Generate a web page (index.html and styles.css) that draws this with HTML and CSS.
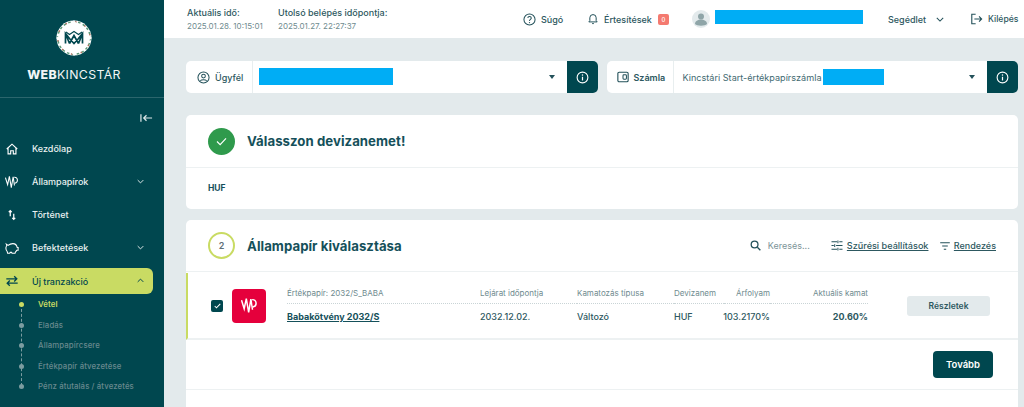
FILE: index.html
```html
<!DOCTYPE html>
<html lang="hu">
<head>
<meta charset="utf-8">
<title>WebKincstár</title>
<link rel="stylesheet" href="styles.css">
</head>
<body>
<div class="app">
  <aside class="sidebar">
    <div class="brand">
      <svg class="logo" viewBox="0 0 36 36" width="36" height="36">
        <circle cx="18" cy="18" r="17.500" fill="#fff"/>
        <circle cx="18" cy="18" r="16.200" fill="none" stroke="#5f9a78" stroke-width="1.500" stroke-dasharray="2.500 2.500"/>
        <circle cx="18" cy="18" r="16.200" fill="none" stroke="#b0705f" stroke-width="1.500" stroke-dasharray="1.500 8.500" stroke-dashoffset="3"/>
        <path fill="#fff" d="M0 18l5-3.500v7zM36 18l-5-3.500v7zM18 36l-3.500-5h7zM18 0l-3.500 5h7z"/>
        <path fill="none" stroke="#00474f" stroke-width="1.700" d="M9.500 23.500V13.500l4 5 4.500 5 4.500-5 4-5v10M9.500 13.500l4 10M26.500 13.500l-4 10M13.500 23.500L18 15.500l4.500 8"/>
        <path fill="none" stroke="#00474f" stroke-width="1.100" d="M10 12l3.500 2.500L18 11.500l4.500 3L26 12"/>
      </svg>
      <div class="brand-name"><b>WEB</b>KINCSTÁR</div>
    </div>
    <div class="collapse-row">
      <svg viewBox="0 0 14 10" width="13" height="10"><path d="M1 1v8M13 5H4M7 2L4 5l3 3" fill="none" stroke="#dfe9ea" stroke-width="1.300"/></svg>
    </div>
    <nav class="menu">
      <a class="item">
        <svg class="ico" viewBox="0 0 16 16"><path d="M2 8l6-5.500L14 8M3.500 7v6.500h3V10h3v3.500h3V7" fill="none" stroke="#fff" stroke-width="1.300"/></svg>
        <span>Kezdőlap</span>
      </a>
      <a class="item">
        <svg class="ico" viewBox="0 0 16 16"><path d="M.5 3l2.500 8L5 1.500l2.200 13L9.300 2l1.500 10M10.500 2.500c4.500-.5 5 6 .7 7" fill="none" stroke="#fff" stroke-width="1.200"/></svg>
        <span>Állampapírok</span>
        <svg class="chev" viewBox="0 0 10 6"><path d="M1 1l4 4 4-4" fill="none" stroke="#dfe9ea" stroke-width="1.400"/></svg>
      </a>
      <a class="item">
        <svg class="ico" viewBox="0 0 16 16"><path d="M6 9.500V3M4.300 4.800L6 3l1.700 1.800M10 6.500V13M8.300 11.200L10 13l1.700-1.800" fill="none" stroke="#fff" stroke-width="1.400"/></svg>
        <span>Történet</span>
      </a>
      <a class="item">
        <svg class="ico" viewBox="0 0 16 16"><path d="M1.500 3.500l2 1.500C5 3.800 7 3 9 3c2.800 0 4.500 2 5 4.500h1v3h-1.500c-.5 1-1 1.500-1.500 2l-.5 1.500H8l-.5-1H6l-.5 1H3L2.500 12C1.500 11 1 9.500 1 8c0-1 .5-2 1-3z" fill="none" stroke="#fff" stroke-width="1.200"/></svg>
        <span>Befektetések</span>
        <svg class="chev" viewBox="0 0 10 6"><path d="M1 1l4 4 4-4" fill="none" stroke="#dfe9ea" stroke-width="1.400"/></svg>
      </a>
      <a class="item active">
        <svg class="ico" viewBox="0 0 16 16"><path d="M1.500 5.500h12M10.500 2.500l3 3-3 3M14.500 10.500h-12M5.500 7.500l-3 3 3 3" fill="none" stroke="#00474f" stroke-width="1.500"/></svg>
        <span>Új tranzakció</span>
        <svg class="chev" viewBox="0 0 10 6"><path d="M1 5l4-4 4 4" fill="none" stroke="#00474f" stroke-width="1.400"/></svg>
      </a>
    </nav>
    <ul class="sub">
      <li class="current">Vétel</li>
      <li>Eladás</li>
      <li>Állampapírcsere</li>
      <li>Értékpapír átvezetése</li>
      <li>Pénz átutalás / átvezetés</li>
    </ul>
  </aside>

  <div class="main">
    <header class="topbar">
      <div class="time">
        <div class="time-label">Aktuális idő:</div>
        <div class="time-value">2025.01.28. 10:15:01</div>
      </div>
      <div class="time">
        <div class="time-label">Utolsó belépés időpontja:</div>
        <div class="time-value">2025.01.27. 22:27:37</div>
      </div>
      <a class="top-link help">
        <svg viewBox="0 0 14 14" width="13" height="13"><circle cx="7" cy="7" r="6" fill="none" stroke="#23515a" stroke-width="1.100"/><path d="M5.200 5.500c0-2.300 3.700-2.300 3.700 0 0 1.500-1.900 1.400-1.900 3" fill="none" stroke="#23515a" stroke-width="1.100"/><circle cx="7" cy="10.300" r=".7" fill="#23515a"/></svg>
        Súgó
      </a>
      <a class="top-link notif">
        <svg viewBox="0 0 12 14" width="10" height="12"><path d="M1 10.500h10L9.800 9V5.500a3.800 3.800 0 0 0-7.600 0V9zM5 12.500h2" fill="none" stroke="#23515a" stroke-width="1.200"/></svg>
        Értesítések
        <span class="badge">0</span>
      </a>
      <div class="user">
        <svg viewBox="0 0 18 18" width="18" height="18"><circle cx="9" cy="9" r="9" fill="#e3eaec"/><circle cx="9" cy="6.500" r="3" fill="#8fa5a8"/><path d="M3 14c0-6 12-6 12 0-2 2.300-10 2.300-12 0z" fill="#8fa5a8"/></svg>
        <span class="mask mask-user"></span>
      </div>
      <a class="top-link guide">
        Segédlet
        <svg viewBox="0 0 10 6" width="8" height="5"><path d="M1 1l4 4 4-4" fill="none" stroke="#23515a" stroke-width="1.300"/></svg>
      </a>
      <a class="top-link logout">
        <svg viewBox="0 0 14 14" width="13" height="12"><path d="M6 1.500H1.500v11H6M4.500 7H13M10 4l3 3-3 3" fill="none" stroke="#23515a" stroke-width="1.300"/></svg>
        Kilépés
      </a>
    </header>

    <div class="content">
      <div class="selectors">
        <div class="selector">
          <div class="sel-label client">
            <svg viewBox="0 0 14 14" width="13" height="13"><circle cx="7" cy="7" r="6" fill="none" stroke="#23515a" stroke-width="1.100"/><circle cx="7" cy="5.500" r="2" fill="none" stroke="#23515a" stroke-width="1.100"/><path d="M3.500 10.500c1.500-1.500 5.500-1.500 7 0" fill="none" stroke="#23515a" stroke-width="1.100"/></svg>
            Ügyfél
          </div>
          <div class="sel-value">
            <span class="mask mask-client"></span>
            <span class="caret"></span>
          </div>
          <button class="info"><svg viewBox="0 0 14 14" width="13" height="13"><circle cx="7" cy="7" r="5.800" fill="none" stroke="#fff" stroke-width="1.200"/><path d="M7 6.200v4" stroke="#fff" stroke-width="1.300"/><circle cx="7" cy="4.200" r=".8" fill="#fff"/></svg></button>
        </div>
        <div class="selector">
          <div class="sel-label account">
            <svg viewBox="0 0 14 14" width="12" height="12"><rect x="1" y="1.500" width="12" height="11" rx="1.500" fill="none" stroke="#23515a" stroke-width="1.300"/><rect x="7" y="4.500" width="4" height="5" rx="1" fill="none" stroke="#23515a" stroke-width="1.200"/></svg>
            Számla
          </div>
          <div class="sel-value">
            <span class="sel-text">Kincstári Start-értékpapírszámla</span><span class="mask mask-account"></span>
            <span class="caret"></span>
          </div>
          <button class="info"><svg viewBox="0 0 14 14" width="13" height="13"><circle cx="7" cy="7" r="5.800" fill="none" stroke="#fff" stroke-width="1.200"/><path d="M7 6.200v4" stroke="#fff" stroke-width="1.300"/><circle cx="7" cy="4.200" r=".8" fill="#fff"/></svg></button>
        </div>
      </div>

      <section class="card first">
        <div class="card-head done">
          <div class="step step-done"><svg viewBox="0 0 12 10" width="11" height="9"><path d="M1 5l3.500 3.500L11 1.500" fill="none" stroke="#fff" stroke-width="1.300"/></svg></div>
          <h2>Válasszon devizanemet!</h2>
        </div>
        <div class="currency">HUF</div>
      </section>

      <section class="card second">
        <div class="card-head">
          <div class="step step-open">2</div>
          <h2>Állampapír kiválasztása</h2>
          <div class="tools">
            <span class="search">
              <svg viewBox="0 0 12 12" width="11" height="11"><circle cx="5" cy="5" r="3.700" fill="none" stroke="#23515a" stroke-width="1.400"/><path d="M8 8l3.300 3.300" stroke="#23515a" stroke-width="1.500"/></svg>
              <span class="placeholder">Keresés...</span>
            </span>
            <a class="tool filter">
              <svg viewBox="0 0 12 12" width="12" height="11"><path d="M0 2h6M8.500 2H12M0 6h2.500M5 6h7M0 10h6M8.500 10H12M7 .5v3M3.500 4.500v3M7 8.500v3" stroke="#23515a" stroke-width="1.100" fill="none"/></svg>
              <span>Szűrési beállítások</span>
            </a>
            <a class="tool sort">
              <svg viewBox="0 0 12 10" width="10" height="8"><path d="M0 1h12M2.500 5h7M4.500 9h3" stroke="#23515a" stroke-width="1.300"/></svg>
              <span>Rendezés</span>
            </a>
          </div>
        </div>
        <div class="row">
          <span class="check"><svg viewBox="0 0 10 8" width="7" height="6"><path d="M1 4l2.500 2.500L9 1" fill="none" stroke="#fff" stroke-width="1.500"/></svg></span>
          <div class="tile"><svg viewBox="0 0 16 16" width="17" height="17"><path d="M.5 3l2.500 8L5 1.500l2.200 13L9.300 2l1.500 10M10.500 2.500c4.500-.5 5 6 .7 7" fill="none" stroke="#fff" stroke-width="1.400"/></svg></div>
          <div class="grid">
            <div class="th">Értékpapír: 2032/S_BABA</div>
            <div class="th">Lejárat időpontja</div>
            <div class="th">Kamatozás típusa</div>
            <div class="th">Devizanem</div>
            <div class="th right">Árfolyam</div>
            <div class="th right">Aktuális kamat</div>
            <div class="td name">Babakötvény 2032/S</div>
            <div class="td">2032.12.02.</div>
            <div class="td">Változó</div>
            <div class="td">HUF</div>
            <div class="td right">103.2170%</div>
            <div class="td right strong">20.60%</div>
          </div>
          <button class="details">Részletek</button>
        </div>
        <div class="actions"><button class="next">Tovább</button></div>
      </section>
    </div>
  </div>
</div>
</body>
</html>
```

FILE: styles.css
```css
* { box-sizing: border-box; }
html, body { margin: 0; height: 407px; overflow: hidden; }
body { font-family: Inter, "Liberation Sans", sans-serif; color: #23515a; background: #e3eaec; }
button { font-family: inherit; border: 0; padding: 0; }
.app { display: flex; height: 407px; }

.sidebar { width: 164px; flex: none; background: #00474f; color: #e6eeef; }
.brand { height: 98px; border-bottom: 1px solid #2b666d; padding: 20px 16px 0 0; display: flex; flex-direction: column; align-items: center; }
.logo { display: block; flex: none; }
.brand-name { margin-top: 12px; font-size: 12.300px; letter-spacing: .35px; color: #f2f6f6; line-height: 14px; }
.brand-name b { font-weight: 800; }
.collapse-row { height: 34px; display: flex; justify-content: flex-end; align-items: flex-start; padding: 15px 11px 0 0; }
.menu { display: flex; flex-direction: column; }
.item { height: 33px; display: flex; align-items: center; font-size: 9px; font-weight: 500; padding-left: 5px; color: #eaf1f1; position: relative; }
.item .ico { width: 14px; height: 14px; flex: none; margin-right: 13px; }
.item .chev { width: 7px; height: 5px; position: absolute; left: 137px; top: 14px; }
.item.active { height: 26px; width: 153px; margin-top: 4px; background: #c9db63; color: #00474f; border-radius: 0 6px 6px 0; }
.item.active .chev { top: 10px; }
.sub { list-style: none; margin: 0; padding: 0 0 0 38px; position: relative; }
.sub::before { content: ""; position: absolute; left: 21px; top: 10px; bottom: 11px; border-left: 1px dashed #7b9ca0; }
.sub li { height: 20.600px; line-height: 20.600px; font-size: 7.800px; font-weight: 500; color: #68898e; position: relative; letter-spacing: .1px; }
.sub li::before { content: ""; position: absolute; left: -19px; top: 8px; width: 5px; height: 5px; border-radius: 50%; background: #7b9ca0; }
.sub li.current { color: #c9db63; font-weight: 600; }
.sub li.current::before { background: #c9db63; }

.main { flex: 1; min-width: 0; display: flex; flex-direction: column; }
.topbar { height: 38px; flex: none; background: #fff; display: flex; align-items: center; padding-left: 23px; font-size: 9px; }
.time { width: 91px; padding-top: 1px; }
.time + .time { width: 245px; }
.time-label { font-size: 9px; font-weight: 500; color: #2d5860; line-height: 13px; }
.time-value { font-size: 8px; color: #6f8b8f; line-height: 13px; margin-top: 1px; }
.top-link { display: flex; align-items: center; gap: 5px; font-size: 9px; font-weight: 500; color: #2d5860; }
.help { width: 65px; }
.notif { width: 104px; gap: 6px; }
.badge { width: 11px; height: 11px; border-radius: 2px; background: #f47a70; color: #fff; font-size: 6px; text-align: center; line-height: 11px; }
.user { display: flex; align-items: center; width: 196px; gap: 5px; }
.mask { display: inline-block; background: #00adf5; }
.mask-user { width: 148px; height: 14px; margin-top: -4px; }
.guide { width: 82px; }
.guide svg { margin-left: 5px; }
.logout { font-size: 8.600px; }

.content { flex: 1; padding: 23px 6px 0 22px; min-height: 0; }
.selectors { display: flex; gap: 9px; }
.selector { width: 412px; height: 32px; background: #fff; border-radius: 5px; display: flex; }
.sel-label { flex: none; display: flex; align-items: center; gap: 5px; padding-left: 11px; border-right: 1px solid #e8eeef; font-size: 9px; font-weight: 500; color: #2d5860; }
.client { width: 67px; }
.account { width: 67px; padding-left: 10px; font-weight: 600; }
.sel-value { flex: 1; display: flex; align-items: center; padding-left: 6px; font-size: 9px; position: relative; }
.account + .sel-value { padding-left: 9px; }
.sel-text { color: #3f6a71; font-size: 9.100px; margin-right: 1px; }
.mask-client { width: 134px; height: 17px; margin-top: -2px; }
.mask-account { width: 61px; height: 16px; }
.caret { position: absolute; right: 12px; top: 14px; border: 3px solid transparent; border-top: 4px solid #23515a; border-bottom: 0; }
.info { width: 31px; flex: none; background: #00474f; border-radius: 0 5px 5px 0; display: flex; align-items: center; justify-content: center; }

.card { background: #fff; border-radius: 5px; }
.first { height: 94px; margin-top: 22px; }
.second { margin-top: 11px; height: 200px; }
.card-head { height: 52px; display: flex; align-items: center; padding-left: 22px; border-bottom: 1px solid #edf1f2; position: relative; }
.card-head.done { height: 53px; }
h2 { margin: 0 0 0 12px; font-size: 13.200px; font-weight: 700; color: #15505a; letter-spacing: .05px; }
.step { width: 27px; height: 27px; border-radius: 50%; display: flex; align-items: center; justify-content: center; flex: none; }
.step-done { background: #2f9a4c; }
.step-open { border: 2px solid #c9db63; font-size: 9px; font-weight: 600; color: #5f6f78; }
.currency { padding: 15px 0 0 22px; font-size: 8.500px; font-weight: 700; color: #15505a; }
.tools { margin-left: auto; display: flex; align-items: center; padding-right: 22px; font-size: 9px; }
.search { display: flex; align-items: center; gap: 7px; width: 81px; }
.placeholder { color: #7d9599; }
.tool { display: flex; align-items: center; gap: 4px; color: #2d5860; }
.tool span { text-decoration: underline; font-weight: 500; }
.filter { width: 109px; }
.filter span { font-size: 9.100px; }
.row { height: 67px; border-left: 2px solid #c9db63; border-bottom: 2px solid #edf1f2; display: flex; align-items: center; padding-left: 23px; margin-top: 1px; }
.check { width: 12px; height: 12px; border-radius: 2px; background: #00474f; display: flex; align-items: center; justify-content: center; flex: none; }
.tile { width: 34px; height: 34px; border-radius: 4px; background: #e5003c; margin-left: 9px; display: flex; align-items: center; justify-content: center; flex: none; }
.grid { width: 581px; margin-left: 21px; display: grid; grid-template-columns: 193px 97px 97px 50px 46px 98px; grid-template-rows: 22px 25px; font-size: 8px; }
.th { color: #6f8b8f; border-bottom: 1px dotted #c9d4d6; display: flex; align-items: center; font-size: 8px; }
.td { display: flex; align-items: center; font-size: 9px; font-weight: 500; color: #2d5860; }
.right { justify-content: flex-end; }
.name { font-weight: 700; text-decoration: underline; color: #15505a; }
.strong { font-weight: 700; }
.details { width: 83px; height: 20px; background: #e3eaec; border-radius: 3px; margin: 1px 0 0 39px; font-size: 8.500px; font-weight: 600; color: #2d5860; }
.actions { height: 50px; border-bottom: 1px solid #edf1f2; display: flex; justify-content: flex-end; align-items: center; padding-right: 25px; }
.next { width: 60px; height: 27px; background: #00474f; color: #fff; border-radius: 4px; font-size: 9.500px; font-weight: 600; }
```
